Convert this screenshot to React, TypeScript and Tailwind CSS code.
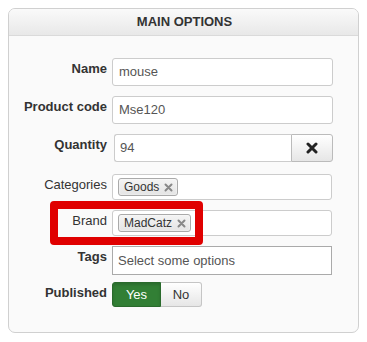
import React from 'react';

const font = { fontFamily: '"Liberation Sans", Arial, sans-serif' };

function Label({ children, bold = true }: { children: React.ReactNode; bold?: boolean }) {
  return (
    <div className={`w-[98px] shrink-0 pr-0 text-right text-[13px] leading-[16px] text-[#333] ${bold ? 'font-bold' : 'font-normal'} pt-[3px]`}>
      {children}
    </div>
  );
}

function Chip({ text }: { text: string }) {
  return (
    <span className="flex h-[18px] items-center gap-[5px] rounded-[3px] border border-[#aaa] bg-gradient-to-b from-[#f4f4f4] to-[#e4e4e4] pl-[5px] pr-[4px] text-[12px] text-[#333] shadow-[0_0_2px_white_inset]">
      {text}
      <svg width="9" height="9" viewBox="0 0 9 9" className="mt-[1px]">
        <path d="M1.5 1.5 L7.5 7.5 M7.5 1.5 L1.5 7.5" stroke="#888" strokeWidth="2" strokeLinecap="round" />
      </svg>
    </span>
  );
}

export default function App() {
  return (
    <div className="h-[342px] w-[367px] bg-white pl-[8px] pt-[8px]" style={font}>
      <div className="flex h-[325px] w-[351px] flex-col overflow-hidden rounded-[7px] border border-[#d0d0d0] bg-[#fafafa]">
        <div className="flex h-[27px] shrink-0 items-center justify-center border-b border-[#dadada] bg-gradient-to-b from-[#fafafa] to-[#e8e8e8] pl-[2px] text-[13px] font-bold text-[#333]">
          MAIN OPTIONS
        </div>

        <div className="flex flex-col">
          <div className="mt-[22px] flex gap-[5px]">
            <Label>Name</Label>
            <div className="flex h-[28px] w-[221px] items-center rounded-[3px] border border-[#ccc] bg-white px-[6px] text-[13px] text-[#555]">mouse</div>
          </div>

          <div className="mt-[10px] flex gap-[5px]">
            <Label>Product code</Label>
            <div className="flex h-[28px] w-[221px] items-center rounded-[3px] border border-[#ccc] bg-white px-[6px] text-[13px] text-[#555]">Mse120</div>
          </div>

          <div className="mt-[10px] flex gap-[5px]">
            <Label>Quantity</Label>
            <div className="ml-[2px] flex h-[28px] w-[219px]">
              <div className="flex flex-1 items-center rounded-l-[3px] border border-r-0 border-[#ccc] bg-white px-[5px] text-[13px] text-[#555]">94</div>
              <div className="flex w-[42px] items-center justify-center rounded-r-[3px] border border-[#bbb] bg-gradient-to-b from-white to-[#e6e6e6]">
                <svg width="12" height="12" viewBox="0 0 12 12">
                  <path d="M2 2 L10 10 M10 2 L2 10" stroke="#222" strokeWidth="3" strokeLinecap="round" />
                </svg>
              </div>
            </div>
          </div>

          <div className="mt-[12px] flex gap-[5px]">
            <Label bold={false}>Categories</Label>
            <div className="flex h-[26px] w-[220px] items-center rounded-[3px] border border-[#ccc] bg-white px-[5px]">
              <Chip text="Goods" />
            </div>
          </div>

          <div className="relative mt-[10px] flex gap-[5px]">
            <Label bold={false}>Brand</Label>
            <div className="flex h-[26px] w-[220px] items-center rounded-[3px] border border-[#ccc] bg-white px-[5px]">
              <Chip text="MadCatz" />
            </div>
            <div className="pointer-events-none absolute left-[41px] top-[-9px] h-[44px] w-[153px] rounded-[4px] border-[8px] border-[#e00000]" />
          </div>

          <div className="mt-[10px] flex gap-[5px]">
            <Label>Tags</Label>
            <div className="flex h-[29px] w-[220px] items-center border border-[#aaa] bg-white px-[5px] text-[13px] text-[#555]">Select some options</div>
          </div>

          <div className="mt-[7px] flex gap-[5px]">
            <Label>Published</Label>
            <div className="flex h-[25px] text-[13px]">
              <div className="flex w-[49px] items-center justify-center rounded-l-[3px] border border-[#2a6a2c] bg-[#327f35] text-white shadow-[inset_0_2px_3px_rgba(0,0,0,0.15)]">Yes</div>
              <div className="flex w-[41px] items-center justify-center rounded-r-[3px] border border-l-0 border-[#c5c5c5] bg-gradient-to-b from-white to-[#e6e6e6] text-[#333]">No</div>
            </div>
          </div>
        </div>
      </div>
    </div>
  );
}
